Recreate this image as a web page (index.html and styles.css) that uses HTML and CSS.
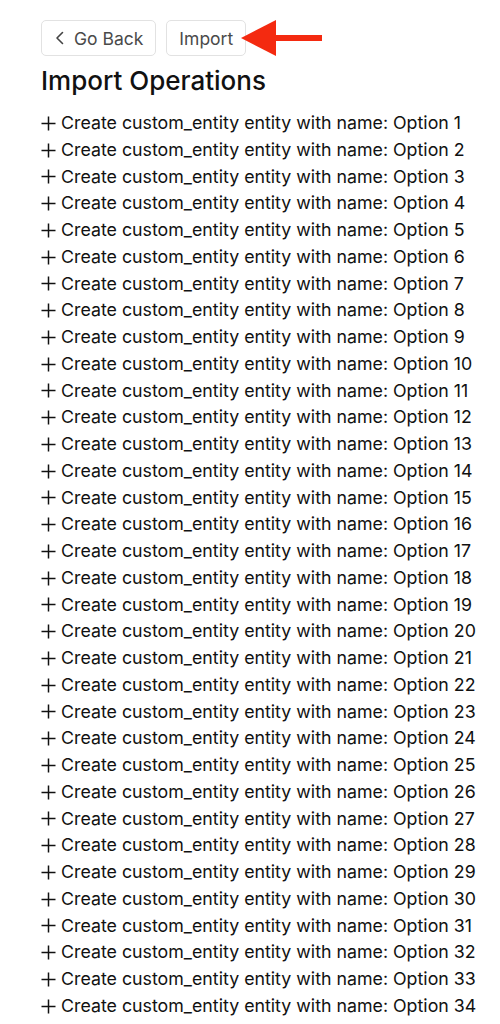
FILE: index.html
```html
<!DOCTYPE html>
<html lang="en">
<head>
<meta charset="utf-8">
<title>Import Operations</title>
<link rel="stylesheet" href="styles.css">
</head>
<body>
<main class="page">
  <div class="toolbar">
    <button class="btn btn-back" type="button">
      <svg class="chev" width="10" height="14" viewBox="0 0 10 14" aria-hidden="true"><path d="M7.5 1.5 L2 7 L7.5 12.5" fill="none" stroke="#444" stroke-width="1.6" stroke-linecap="round" stroke-linejoin="round"/></svg>
      <span>Go Back</span>
    </button>
    <button class="btn" type="button">Import</button>
    <svg class="arrow" width="82" height="38" viewBox="0 0 82 38" aria-hidden="true">
      <polygon points="0,19 35,1 35,37" fill="#f42a10"/>
      <rect x="33" y="16" width="48" height="6" fill="#f42a10"/>
    </svg>
  </div>
  <h1 class="title">Import Operations</h1>
  <ul class="ops" id="ops"></ul>
</main>
<script>
  var ul = document.getElementById('ops');
  for (var i = 1; i <= 34; i++) {
    var li = document.createElement('li');
    li.className = 'op';
    li.innerHTML = '<svg class="plus" width="15" height="15" viewBox="0 0 15 15" aria-hidden="true"><path d="M7.5 0.5 V14.5 M0.5 7.5 H14.5" stroke="#111" stroke-width="1.5"/></svg><span>Create custom_entity entity with name: Option ' + i + '</span>';
    ul.appendChild(li);
  }
</script>
</body>
</html>
```
FILE: styles.css
```css
html, body {
  margin: 0;
  padding: 0;
  background: #ffffff;
}
body {
  font-family: Inter, "Noto Sans", sans-serif;
  color: #111111;
}
.page {
  padding: 20px 0 0 41px;
}
.toolbar {
  display: flex;
  align-items: center;
  gap: 10px;
  height: 36px;
}
.btn {
  display: flex;
  align-items: center;
  gap: 9px;
  height: 36px;
  box-sizing: border-box;
  padding: 0 12px 0 12px;
  border: 1px solid #e2e2e2;
  border-radius: 5px;
  background: #ffffff;
  font-family: Inter, "Noto Sans", sans-serif;
  font-size: 17.5px;
  color: #4a4a4a;
}
.btn-back {
  padding-left: 13px;
}
.chev {
  display: block;
}
.arrow {
  display: block;
  margin-left: -15px;
  position: relative;
}
.title {
  margin: 9px 0 13px;
  font-size: 26px;
  font-weight: 500;
  line-height: 32px;
  color: #111111;
}
.ops {
  list-style: none;
  margin: 0;
  padding: 0;
}
.op {
  display: flex;
  align-items: center;
  gap: 5px;
  font-size: 17.8px;
  line-height: 26.76px;
  height: 26.76px;
  color: #111111;
}
.plus {
  display: block;
  flex: none;
}
```
